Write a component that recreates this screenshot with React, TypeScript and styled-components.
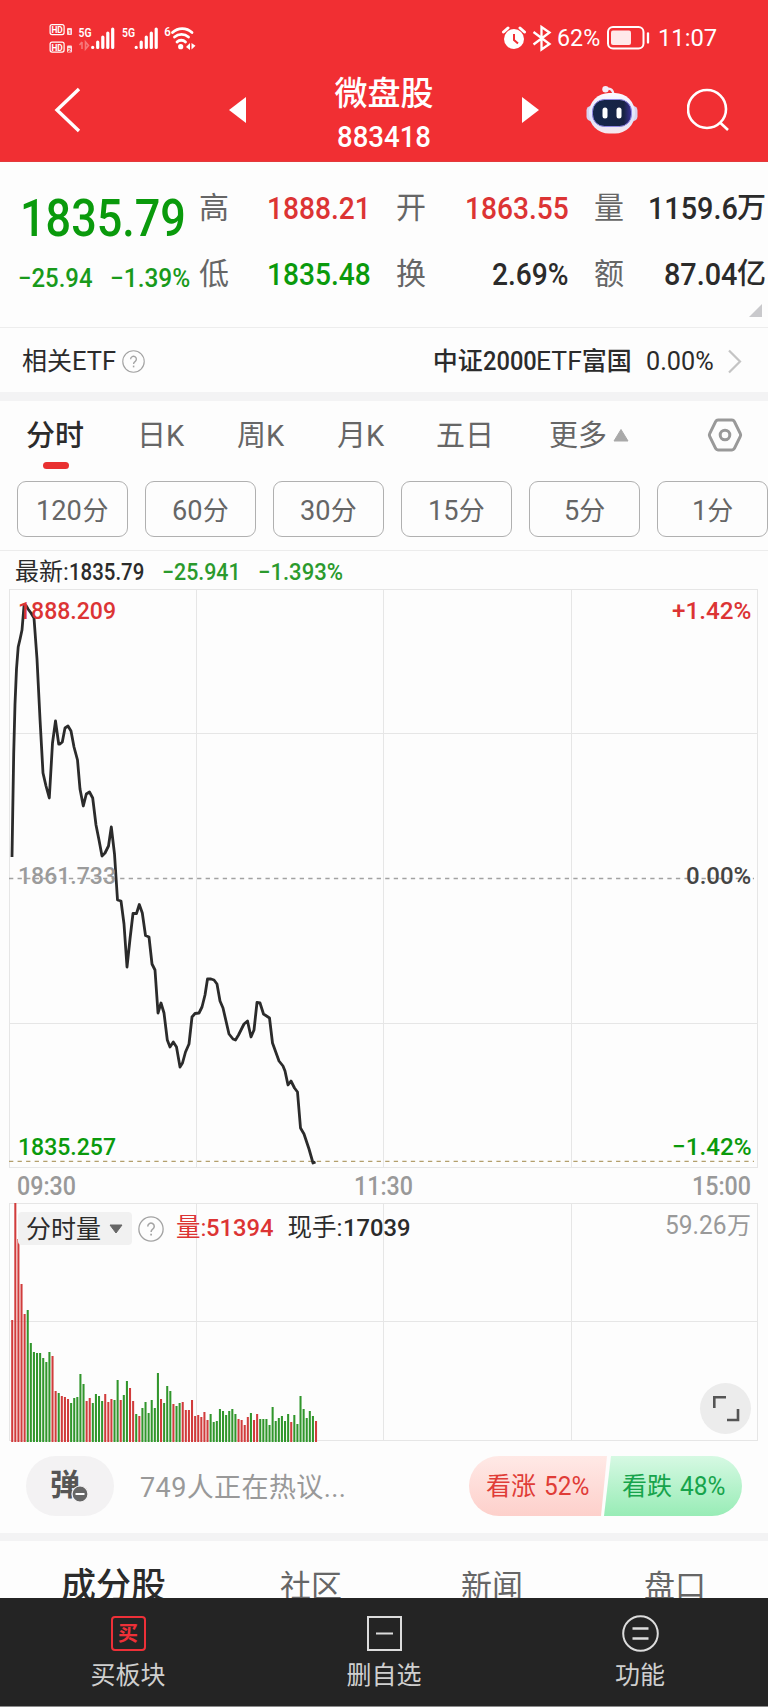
import React from "react";
import styled, { createGlobalStyle } from "styled-components";

const RED = "#dc3434";
const GREEN = "#0a9a0c";
const INK = "#2b2b2b";
const MUTED = "#666666";
const PALE = "#999999";

const GlobalStyle = createGlobalStyle`
  * { box-sizing: border-box; }
  html, body { margin: 0; padding: 0; background: #fdfdfd; }
  body {
    width: 768px;
    height: 1707px;
    overflow: hidden;
    font-family: Roboto, "Noto Sans CJK SC", sans-serif;
    line-height: 1;
    white-space: nowrap;
  }
  svg { display: block; flex: none; }
`;

const Screen = styled.div`
  width: 768px;
  height: 1707px;
  display: flex;
  flex-direction: column;
  overflow: hidden;
  background: #fdfdfd;
  color: ${INK};
`;

/* Condensed figures: advances (in em) size the slot, the glyphs are narrowed into it. */
const ADVANCE: Record<string, number> = {
  ".": 0.275, ":": 0.255, "%": 0.735, "−": 0.555, "+": 0.56, E: 0.568, T: 0.6, F: 0.553,
};
const advance = (text: string) => [...text].reduce((sum, ch) => sum + (ADVANCE[ch] ?? 0.565), 0);

const NumSlot = styled.span<{ $em: number; $size?: number; $weight: number }>`
  display: inline-block;
  flex: none;
  width: ${(p) => p.$em.toFixed(3)}em;
  font-size: ${(p) => (p.$size ? p.$size + "px" : "inherit")};
  font-weight: ${(p) => p.$weight};
`;
const NumGlyphs = styled.span<{ $narrow: number }>`
  display: inline-block;
  transform: scaleX(${(p) => p.$narrow});
  transform-origin: left center;
`;
const Num = ({ children, size, narrow = 0.88, weight = 500 }: { children: string; size?: number; narrow?: number; weight?: number }) => (
  <NumSlot $em={advance(children) * narrow} $size={size} $weight={weight}>
    <NumGlyphs $narrow={narrow}>{children}</NumGlyphs>
  </NumSlot>
);

/* header */
const Header = styled.header`
  height: 162px;
  background: #f12f33;
  color: #fff;
  border-bottom: 1px solid #e33a3c;
`;
const StatusBar = styled.div`
  height: 66px;
  padding: 9px 50px 0 49px;
  display: flex;
  align-items: center;
  justify-content: space-between;
`;
const StatusGroup = styled.div`
  display: flex;
  align-items: center;
`;
const Percent = styled.span`
  margin: 0 5px 0 2px;
`;
const Clock = styled.span`
  margin-left: 7px;
`;
const NavBar = styled.div`
  height: 87px;
  display: grid;
  grid-template-columns: 229px 17px 1fr 17px 47px 52px 49px 81px;
  align-items: center;
`;
const BackSlot = styled.div`
  padding-left: 54px;
`;
const Title = styled.h1`
  margin: 0;
  padding-top: 10px;
  font-size: 33px;
  font-weight: 500;
  display: flex;
  flex-direction: column;
  align-items: center;
  gap: 13px;
`;

/* quote */
const Quote = styled.section`
  height: 166px;
  display: flex;
  position: relative;
  border-bottom: 1px solid #ededed;
`;
const PriceColumn = styled.div`
  width: 199px;
  padding: 28px 0 0 18px;
`;
const Price = styled.div`
  height: 57px;
  padding-left: 2px;
  display: flex;
  align-items: center;
  color: ${GREEN};
`;
const Change = styled.div`
  display: flex;
  justify-content: space-between;
  width: 172px;
  height: 26px;
  margin-top: 18px;
  align-items: center;
  color: #199a1b;
`;
const Stats = styled.dl`
  margin: 13px 0 0;
  width: 569px;
  display: grid;
  grid-template-columns: 171px 172px 172px;
  grid-auto-rows: 66px;
  column-gap: 26px;
`;
const Stat = styled.div`
  display: flex;
  align-items: center;
  justify-content: space-between;
`;
const StatLabel = styled.dt`
  font-size: 30px;
  color: ${MUTED};
`;
const StatValue = styled.dd<{ $color: string }>`
  margin: 0;
  display: flex;
  align-items: center;
  font-size: 29px;
  font-weight: 500;
  color: ${(p) => p.$color};
`;
const Corner = styled.svg`
  position: absolute;
  left: 749px;
  top: 142px;
`;

/* related ETF */
const EtfRow = styled.div`
  height: 64px;
  padding: 2px 26px 0 22px;
  display: flex;
  align-items: center;
  font-size: 25px;
`;
const EtfName = styled.div`
  margin-left: auto;
  margin-right: 14px;
  display: flex;
  align-items: center;
  font-weight: 500;
`;
const EtfArrow = styled.div`
  margin-left: 13px;
`;
const HelpSlot = styled.div<{ $gap: number }>`
  margin-left: ${(p) => p.$gap}px;
`;
const Band = styled.div<{ $h: number }>`
  height: ${(p) => p.$h}px;
  flex: none;
  background: #f3f3f4;
`;

/* period tabs */
const Periods = styled.nav`
  height: 80px;
  padding-left: 26px;
  display: grid;
  grid-template-columns: 111px 100px 100px 99px 113px 158px 1fr;
  font-size: 29px;
  color: ${MUTED};
`;
const Period = styled.div<{ $active?: boolean }>`
  display: flex;
  align-items: center;
  gap: 6px;
  height: 71px;
  font-weight: ${(p) => (p.$active ? 500 : 400)};
  color: ${(p) => (p.$active ? INK : MUTED)};
  & > svg { margin-bottom: 3px; }
`;
const ActivePeriod = styled.div`
  width: 57px;
`;
const Underline = styled.div`
  width: 26px;
  height: 7px;
  margin: -10px 0 0 17px;
  border-radius: 3.5px;
  background: #e93030;
`;
const Minutes = styled.div`
  height: 70px;
  padding-left: 17px;
  display: flex;
  gap: 17px;
  border-bottom: 1px solid #ececec;
`;
const Minute = styled.button`
  flex: none;
  width: 111px;
  height: 56px;
  padding: 3px 0 0;
  border: 1px solid #b0b0b0;
  border-radius: 9px;
  background: none;
  color: ${MUTED};
  display: flex;
  align-items: center;
  justify-content: center;
  font: 26px/1 Roboto, "Noto Sans CJK SC", sans-serif;
`;

/* intraday chart */
const Legend = styled.div`
  height: 38px;
  padding: 4px 0 0 15px;
  display: flex;
  align-items: center;
  font-size: 24px;
`;
const LegendItem = styled.span<{ $gap?: number; $color?: string }>`
  margin-left: ${(p) => p.$gap ?? 0}px;
  color: ${(p) => p.$color ?? INK};
`;
const Plot = styled.div<{ $h: number }>`
  position: relative;
  flex: none;
  width: 768px;
  height: ${(p) => p.$h}px;
`;
const AxisLabel = styled.span<{ $y: number; $side: "left" | "right"; $color: string }>`
  position: absolute;
  top: ${(p) => p.$y}px;
  ${(p) => (p.$side === "left" ? "left: 18px;" : "right: 17px;")}
  color: ${(p) => p.$color};
  display: flex;
  align-items: center;
  font-size: 24px;
`;
const Times = styled.div`
  height: 35px;
  padding: 1px 18px 0 17px;
  display: flex;
  align-items: center;
  justify-content: space-between;
  color: ${PALE};
`;
const VolumeHead = styled.div`
  position: absolute;
  left: 18px;
  top: 9px;
  height: 33px;
  display: flex;
  align-items: center;
  font-size: 24.5px;
`;
const Selector = styled.div`
  width: 114px;
  height: 33px;
  padding: 1px 0 0 8px;
  display: flex;
  align-items: center;
  gap: 8px;
  border-radius: 4px;
  background: #f1f1f1;
  font-size: 25px;
`;
const Expand = styled.div`
  position: absolute;
  right: 17px;
  top: 180px;
  width: 51px;
  height: 51px;
  border-radius: 50%;
  background: #ececec;
  display: flex;
  align-items: center;
  justify-content: center;
`;

/* discussion row */
const Talk = styled.div`
  height: 91px;
  padding: 0 26px 3px;
  display: flex;
  align-items: center;
`;
const Bullet = styled.div`
  position: relative;
  width: 88px;
  height: 60px;
  padding-left: 24px;
  padding-bottom: 3px;
  border-radius: 30px;
  background: #f3f2f3;
  display: flex;
  align-items: center;
  font-size: 30px;
  font-weight: 700;
  color: #555;
`;
const BulletBadge = styled.svg`
  position: absolute;
  left: 45px;
  top: 29px;
`;
const TalkText = styled.div`
  margin-left: 26px;
  padding-top: 5px;
  font-size: 27px;
  letter-spacing: 0.4px;
  color: ${PALE};
`;
const Poll = styled.div`
  margin-left: auto;
  width: 273px;
  height: 60px;
  border-radius: 30px;
  overflow: hidden;
  display: flex;
`;
const Vote = styled.div<{ $up?: boolean }>`
  width: 138px;
  flex: none;
  margin-left: ${(p) => (p.$up ? 0 : -3)}px;
  display: flex;
  align-items: center;
  gap: 8px;
  padding-left: ${(p) => (p.$up ? 17 : 18)}px;
  font-size: 25px;
  color: ${(p) => (p.$up ? "#e03c37" : "#17a44c")};
  background: ${(p) =>
    p.$up ? "linear-gradient(#ffe9e6, #fdd0cb)" : "linear-gradient(#d6f9e3, #98ecb6)"};
  clip-path: ${(p) =>
    p.$up ? "polygon(0 0, 100% 0, 132px 100%, 0 100%)" : "polygon(7px 0, 100% 0, 100% 100%, 0 100%)"};
`;

const Sections = styled.div`
  height: 57px;
  overflow: hidden;
  flex: none;
  padding: 28px 0 0 61px;
  display: grid;
  grid-template-columns: 219px 181px 183px 1fr;
  align-items: start;
`;
const SectionTab = styled.div<{ $active?: boolean }>`
  font-size: ${(p) => (p.$active ? 35 : 31)}px;
  font-weight: ${(p) => (p.$active ? 500 : 400)};
  color: ${(p) => (p.$active ? INK : MUTED)};
  padding-top: ${(p) => (p.$active ? 0 : 2)}px;
`;

const BottomBar = styled.footer`
  height: 109px;
  flex: none;
  background: #242424;
  border-bottom: 1px solid #8b8b8b;
  display: grid;
  grid-template-columns: repeat(3, 1fr);
  color: #cfcfcf;
`;
const Action = styled.div`
  display: flex;
  flex-direction: column;
  align-items: center;
  padding-top: 17px;
  gap: 11px;
  font-size: 25px;
`;
const IconBox = styled.div`
  height: 37px;
  display: flex;
  align-items: center;
`;
const BuyBox = styled.div`
  width: 35px;
  height: 35px;
  border: 2px solid #ee3038;
  border-radius: 4px;
  color: #ee3038;
  font-size: 20px;
  font-weight: 700;
  display: flex;
  align-items: center;
  justify-content: center;
`;

const Help = ({ size }: { size: number }) => (
  <svg width={size} height={size} viewBox="0 0 24 24" fill="none" stroke="#a3a3a3">
    <circle cx="12" cy="12" r="11.2" strokeWidth="1.2" />
    <path d="M9 9.6a3 3 0 1 1 4.6 2.5c-1.1.7-1.5 1.2-1.5 2.6" strokeWidth="1.4" />
    <path d="M12.1 16.3v1.8" strokeWidth="1.6" />
  </svg>
);

const Signals = () => (
  <svg width="148" height="32" viewBox="49 21 148 32" fill="#fff" fontFamily="Roboto">
    <g fill="none" stroke="#fff" strokeWidth="1.2">
      <rect x="50.1" y="23.6" width="14" height="10" rx="2" />
      <rect x="50.1" y="41.1" width="14" height="10" rx="2" />
    </g>
    <text x="51.4" y="32" fontSize="9.5" fontWeight="700" textLength="11.4" lengthAdjust="spacingAndGlyphs">HD</text>
    <text x="51.4" y="49.5" fontSize="9.5" fontWeight="700" textLength="11.4" lengthAdjust="spacingAndGlyphs">HD</text>
    <rect x="67" y="27" width="5" height="7" rx="1" opacity=".85" />
    <rect x="67" y="44.5" width="5" height="7" rx="1" opacity=".85" />
    <text x="67.9" y="33" fontSize="6" fontWeight="700" fill="#f12f33">1</text>
    <text x="67.7" y="50.5" fontSize="6" fontWeight="700" fill="#f12f33">2</text>
    <text x="78.5" y="36.2" fontSize="13.5" fontWeight="600" textLength="13" lengthAdjust="spacingAndGlyphs">5G</text>
    <text x="122" y="36.2" fontSize="13.5" fontWeight="600" textLength="13" lengthAdjust="spacingAndGlyphs">5G</text>
    <path d="M82 41v7M82 41l-2.500 3M85.500 41v7l3-3.5z" stroke="#fff" opacity=".35" fill="none" strokeWidth="1.6" />
    {[0, 43.5].map((dx) => (
      <g key={dx} stroke="#fff" strokeWidth="3.2" strokeLinecap="round">
        <path d={`M${92.7 + dx} 46.3v.2M${97.7 + dx} 41v5.5M${102.8 + dx} 36v10.5M${107.8 + dx} 32v14.5M${112.7 + dx} 28v18.5`} />
      </g>
    ))}
    <text x="164.3" y="35" fontSize="13" fontWeight="600" textLength="6.5" lengthAdjust="spacingAndGlyphs">6</text>
    <g fill="none" stroke="#fff" strokeWidth="2.8" strokeLinecap="round">
      <path d="M172.5 31.5a14 14 0 0 1 19.5 0" />
      <path d="M174.5 36a10.5 10.5 0 0 1 14 0" />
      <path d="M177 41a6 6 0 0 1 8.5 0" />
    </g>
    <circle cx="180.7" cy="45.7" r="2.6" />
    <path d="M186 46l4-4v7zM191.500 42l4 2.800-4 3.800z" />
  </svg>
);

const StatusIcons = () => (
  <svg width="56" height="30" viewBox="500 22 56 30" fill="none" stroke="#fff">
    <circle cx="515" cy="38" r="10" fill="#fff" stroke="none" />
    <path d="M515 33v6l4 3.500" stroke="#f12f33" strokeWidth="2" />
    <path d="M504.500 31l4.500-4M525.500 31l-4.500-4" strokeWidth="3" strokeLinecap="round" />
    <path d="M534.500 31l16 12-8 5.500V26l8 5.500-16 12" strokeWidth="2.3" />
  </svg>
);

const Battery = () => (
  <svg width="46" height="26" viewBox="606 25 46 26" fill="none" stroke="#fff">
    <rect x="609" y="27" width="35.5" height="21.5" rx="5" strokeWidth="2" />
    <rect x="612" y="30.5" width="20" height="14.5" rx="2" fill="#ffe9ea" stroke="none" />
    <path d="M649 33.500v9" strokeWidth="2.3" strokeLinecap="round" />
  </svg>
);

const Robot = () => (
  <svg width="52" height="50" viewBox="0 0 52 50">
    <defs>
      <linearGradient id="shell" x1="0" y1="0" x2="0" y2="1">
        <stop offset="0" stopColor="#fdfaff" />
        <stop offset=".6" stopColor="#dfe3fb" />
        <stop offset="1" stopColor="#f7e9ee" />
      </linearGradient>
      <linearGradient id="visor" x1="0" y1="0" x2="1" y2="0">
        <stop offset="0" stopColor="#15274a" />
        <stop offset=".8" stopColor="#172244" />
        <stop offset="1" stopColor="#3a2f96" />
      </linearGradient>
    </defs>
    <path d="M19 4q8-2 8.500 6" fill="none" stroke="#f1ecf8" strokeWidth="2.2" />
    <circle cx="19.5" cy="4.3" r="3.2" fill="#f4eefa" />
    <rect x="0.5" y="21" width="9" height="15" rx="4.5" fill="#d6d3f0" />
    <rect x="42.5" y="21" width="9" height="15" rx="4.5" fill="#d6d3f0" />
    <rect x="3" y="8" width="46" height="40.5" rx="20" fill="url(#shell)" />
    <rect x="6.5" y="14.5" width="39" height="27" rx="12" fill="url(#visor)" stroke="#8f86e2" strokeWidth="1" />
    <rect x="16.5" y="22.5" width="5" height="11" rx="2.5" fill="#fff" />
    <rect x="30.5" y="22.5" width="5" height="11" rx="2.5" fill="#fff" />
  </svg>
);

/* price path in plot units: x from the left edge, y from the top of the frame */
const LINE: [number, number][] = [
  [12, 268], [12.7, 225], [13.7, 165], [15, 115], [16.5, 80], [18.2, 58], [20.3, 49], [22, 41], [24, 17], [26, 16.5],
  [28, 20], [31, 24], [34, 29], [37, 70], [40, 130], [43, 184], [46, 197], [49.3, 209], [52.5, 154], [55.5, 132],
  [58.7, 155], [60, 155], [62.3, 153], [65, 139], [68, 137], [71, 142], [74, 158], [77.5, 171], [80, 200], [83.3, 217],
  [86.3, 205], [89.5, 203], [92.7, 209], [96, 236], [99, 251], [102, 267], [105, 264], [108.5, 257], [111.3, 238],
  [114.5, 265], [117.5, 311], [121, 312], [124, 335], [127, 378], [130, 350], [133, 324.5], [136.5, 324.5],
  [139.3, 315.5], [142.3, 324], [145.5, 346.5], [149, 348], [152, 375], [155, 381], [158, 424], [161, 414],
  [164, 424], [167.3, 451], [170, 458], [173.3, 453], [176.5, 458], [180, 478], [182.5, 474], [185.5, 463],
  [189, 455], [192, 428], [195, 424.5], [199, 424], [202, 418], [205, 406], [207.5, 390], [211, 390], [214, 391],
  [217, 395], [220, 412], [223, 419], [229, 445], [233, 450], [235.5, 451], [238.5, 446], [244, 435], [247.5, 432],
  [251, 448], [254, 441], [257, 413.5], [260, 414], [263.5, 425], [269.5, 429], [272.5, 454], [279, 472],
  [283, 477], [285, 482], [288, 496], [291, 492], [294.5, 499], [297.5, 503], [300.5, 539], [304, 545], [309, 560],
  [313, 574], [315.5, 573],
];

/* one entry per minute: direction and height */
const BARS =
  "r122 r239 r203 r158 r128 g132 g99 g90 g89 g89 g84 g80 g90 r86 r51 g49 r46 r45 r43 g39 g44 g45 g68 g58 r41 r44 g39 g48 g46 g41 " +
  "r48 r40 r43 g42 g62 r42 g47 g61 r54 r41 g28 r26 g34 g40 g29 g42 g34 g69 r43 g39 g56 g51 r38 g36 g39 r40 r32 r32 r42 r26 " +
  "r27 r25 r30 r22 g28 g20 g21 g33 g31 g27 g31 g33 g28 r23 r22 r17 r25 g29 r22 r28 g23 g23 g23 g17 g35 g21 g24 g26 g21 g28 " +
  "r20 g27 g18 g46 g33 g24 g31 g26 r21";

const Grid = ({ h, rows }: { h: number; rows: number[] }) => (
  <g stroke="#e6e6e6" strokeWidth="1" fill="none" shapeRendering="crispEdges">
    <rect x="9.5" y="0.5" width="748" height={h} />
    {[196.5, 383.5, 571.5].map((x) => (
      <path key={x} d={`M${x} 1V${h}`} />
    ))}
    {rows.map((y) => (
      <path key={y} d={`M9 ${y}H758`} />
    ))}
  </g>
);

const stats: [string, string, string, string][] = [
  ["高", "1888.21", "", RED],
  ["开", "1863.55", "", RED],
  ["量", "1159.6", "万", INK],
  ["低", "1835.48", "", GREEN],
  ["换", "2.69%", "", INK],
  ["额", "87.04", "亿", INK],
];

export default function App() {
  return (
    <Screen>
      <GlobalStyle />
      <Header>
        <StatusBar>
          <StatusGroup>
            <Signals />
          </StatusGroup>
          <StatusGroup>
            <StatusIcons />
            <Percent><Num size={24} narrow={0.97} weight={400}>62%</Num></Percent>
            <Battery />
            <Clock><Num size={24} narrow={0.99} weight={400}>11:07</Num></Clock>
          </StatusGroup>
        </StatusBar>
        <NavBar>
          <BackSlot>
            <svg width="28" height="48" viewBox="0 0 28 48" fill="none" stroke="#fff" strokeWidth="3.4">
              <path d="M25 3L3 24l22 21" />
            </svg>
          </BackSlot>
          <svg width="17" height="26" viewBox="0 0 17 26"><path d="M0 13L17 0v26z" fill="#fff" /></svg>
          <Title>
            <span>微盘股</span>
            <Num size={29} narrow={0.95}>883418</Num>
          </Title>
          <svg width="17" height="26" viewBox="0 0 17 26"><path d="M17 13L0 0v26z" fill="#fff" /></svg>
          <span />
          <Robot />
          <span />
          <svg width="44" height="44" viewBox="0 0 44 44" fill="none" stroke="#fff" strokeWidth="2.6">
            <circle cx="20" cy="21" r="19" />
            <path d="M33 34.500l8 7.500" />
          </svg>
        </NavBar>
      </Header>

      <Quote>
        <PriceColumn>
          <Price><Num size={52} narrow={0.865}>1835.79</Num></Price>
          <Change>
            <Num size={26} narrow={0.92}>−25.94</Num>
            <Num size={26} narrow={0.94}>−1.39%</Num>
          </Change>
        </PriceColumn>
        <Stats>
          {stats.map(([label, value, unit, color]) => (
            <Stat key={label}>
              <StatLabel>{label}</StatLabel>
              <StatValue $color={color}>
                <Num size={32} narrow={unit ? 0.9 : 0.88}>{value}</Num>
                {unit}
              </StatValue>
            </Stat>
          ))}
        </Stats>
        <Corner width="13" height="13" viewBox="0 0 13 13"><path d="M13 0v13H0z" fill="#c9c9cc" /></Corner>
      </Quote>

      <EtfRow>
        相关<Num size={26} narrow={0.98} weight={400}>ETF</Num>
        <HelpSlot $gap={6}><Help size={23} /></HelpSlot>
        <EtfName>中证<Num size={26} narrow={0.91}>2000</Num><Num size={26} narrow={1.02} weight={400}>ETF</Num>富国</EtfName>
        <Num size={26} narrow={0.97} weight={400}>0.00%</Num>
        <EtfArrow>
          <svg width="15" height="25" viewBox="0 0 15 25" fill="none" stroke="#c4c4c4" strokeWidth="2.2">
            <path d="M2 1.500l11 11-11 11" />
          </svg>
        </EtfArrow>
      </EtfRow>
      <Band $h={9} />

      <Periods>
        <ActivePeriod>
          <Period $active>分时</Period>
          <Underline />
        </ActivePeriod>
        <Period>日K</Period>
        <Period>周K</Period>
        <Period>月K</Period>
        <Period>五日</Period>
        <Period>
          更多
          <svg width="16" height="14" viewBox="0 0 16 14"><path d="M8 1.500L15 13H1z" fill="#a9a9a9" stroke="#a9a9a9" strokeLinejoin="round" /></svg>
        </Period>
        <Period>
          <svg width="36" height="34" viewBox="0 0 36 34" fill="none" stroke="#999" strokeWidth="3" strokeLinejoin="round">
            <path d="M11 2h14q1.500 0 2.300 1.400l6 12.200q.7 1.400 0 2.800l-6 12.200Q26.500 32 25 32H11q-1.500 0-2.300-1.400l-6-12.200q-.7-1.400 0-2.800l6-12.200Q9.500 2 11 2z" />
            <circle cx="18" cy="17" r="4.8" />
          </svg>
        </Period>
      </Periods>
      <Minutes>
        {["120", "60", "30", "15", "5", "1"].map((m) => (
          <Minute key={m}><Num size={28} weight={400} narrow={0.97}>{m}</Num>分</Minute>
        ))}
      </Minutes>

      <Legend>
        <LegendItem>最新:</LegendItem>
        <LegendItem><Num narrow={0.85}>1835.79</Num></LegendItem>
        <LegendItem $gap={18} $color="#2b9a2d"><Num narrow={0.89}>−25.941</Num></LegendItem>
        <LegendItem $gap={18} $color="#2b9a2d"><Num narrow={0.92}>−1.393%</Num></LegendItem>
      </Legend>

      <Plot $h={579}>
        <svg width="768" height="579" viewBox="0 0 768 579">
          <Grid h={578} rows={[144.5, 434.5]} />
          <path d="M9 289.500H754" stroke="#a2a2a2" strokeWidth="1.5" strokeDasharray="4.3 4.25" />
          <path d="M9 572.300H754" stroke="#b39f6c" strokeWidth="1.3" strokeDasharray="4.3 4.25" />
          <polyline points={LINE.map((p) => p.join(",")).join(" ")} fill="none" stroke={INK} strokeWidth="2.8" strokeLinejoin="round" />
        </svg>
        <AxisLabel $side="left" $y={10} $color={RED}><Num size={24.5} narrow={0.94}>1888.209</Num></AxisLabel>
        <AxisLabel $side="right" $y={10} $color={RED}><Num size={24.5} narrow={0.99}>+1.42%</Num></AxisLabel>
        <AxisLabel $side="left" $y={275} $color="#9b9b9b"><Num size={24.5} narrow={0.94}>1861.733</Num></AxisLabel>
        <AxisLabel $side="right" $y={275} $color="#444"><Num size={24.5} narrow={0.98}>0.00%</Num></AxisLabel>
        <AxisLabel $side="left" $y={546} $color={GREEN}><Num size={24.5} narrow={0.94}>1835.257</Num></AxisLabel>
        <AxisLabel $side="right" $y={546} $color={GREEN}><Num size={24.5} narrow={0.99}>−1.42%</Num></AxisLabel>
      </Plot>
      <Times>
        <Num size={25} narrow={0.93}>09:30</Num>
        <Num size={25} narrow={0.93}>11:30</Num>
        <Num size={25} narrow={0.93}>15:00</Num>
      </Times>

      <Plot $h={239}>
        <svg width="768" height="239" viewBox="0 0 768 239">
          <Grid h={237} rows={[118.5]} />
          {BARS.split(" ").map((b, i) => {
            const v = Number(b.slice(1));
            return (
              <rect key={i} x={11.2 + i * 3.1} y={239 - v} width="2.05" height={v} fill={b[0] === "r" ? "#d13c3c" : "#31962c"} />
            );
          })}
        </svg>
        <VolumeHead>
          <Selector>
            分时量
            <svg width="14" height="10" viewBox="0 0 14 10"><path d="M1 1h12L7 9z" fill="#666" stroke="#666" strokeLinejoin="round" /></svg>
          </Selector>
          <HelpSlot $gap={6}><Help size={26} /></HelpSlot>
          <LegendItem $gap={12} $color={RED}>量:<Num narrow={0.97}>51394</Num></LegendItem>
          <LegendItem $gap={14}>现手:<Num narrow={0.97}>17039</Num></LegendItem>
        </VolumeHead>
        <AxisLabel $side="right" $y={10} $color={PALE}><Num weight={400} size={25} narrow={0.98}>59.26</Num>万</AxisLabel>
        <Expand>
          <svg width="28" height="28" viewBox="0 0 28 28" fill="none" stroke="#555" strokeWidth="2.6">
            <path d="M2.300 13V2.300H14M26 14v11H15" />
          </svg>
        </Expand>
      </Plot>

      <Talk>
        <Bullet>
          弹
          <BulletBadge width="18" height="18" viewBox="0 0 18 18">
            <circle cx="9" cy="9" r="8" fill="#666" stroke="#f3f2f3" strokeWidth="1.2" />
            <path d="M4.500 9h9" stroke="#fff" strokeWidth="2" />
          </BulletBadge>
        </Bullet>
        <TalkText>749人正在热议...</TalkText>
        <Poll>
          <Vote $up>看涨<Num weight={400} size={26} narrow={0.94}>52%</Num></Vote>
          <Vote>看跌<Num weight={400} size={26} narrow={0.94}>48%</Num></Vote>
        </Poll>
      </Talk>
      <Band $h={8} />

      <Sections>
        <SectionTab $active>成分股</SectionTab>
        <SectionTab>社区</SectionTab>
        <SectionTab>新闻</SectionTab>
        <SectionTab>盘口</SectionTab>
      </Sections>

      <BottomBar>
        <Action>
          <IconBox><BuyBox>买</BuyBox></IconBox>
          买板块
        </Action>
        <Action>
          <IconBox>
            <svg width="35" height="35" viewBox="0 0 35 35" fill="none" stroke="#dcdcdc" strokeWidth="2">
              <rect x="1" y="1" width="33" height="33" />
              <path d="M9 17.500h17" />
            </svg>
          </IconBox>
          删自选
        </Action>
        <Action>
          <IconBox>
            <svg width="37" height="37" viewBox="0 0 37 37" fill="none" stroke="#dcdcdc" strokeWidth="2">
              <circle cx="18.5" cy="18.5" r="17.3" />
              <path d="M10.500 13.500h16M10.500 23.500h16" strokeWidth="2.3" />
            </svg>
          </IconBox>
          功能
        </Action>
      </BottomBar>
    </Screen>
  );
}
